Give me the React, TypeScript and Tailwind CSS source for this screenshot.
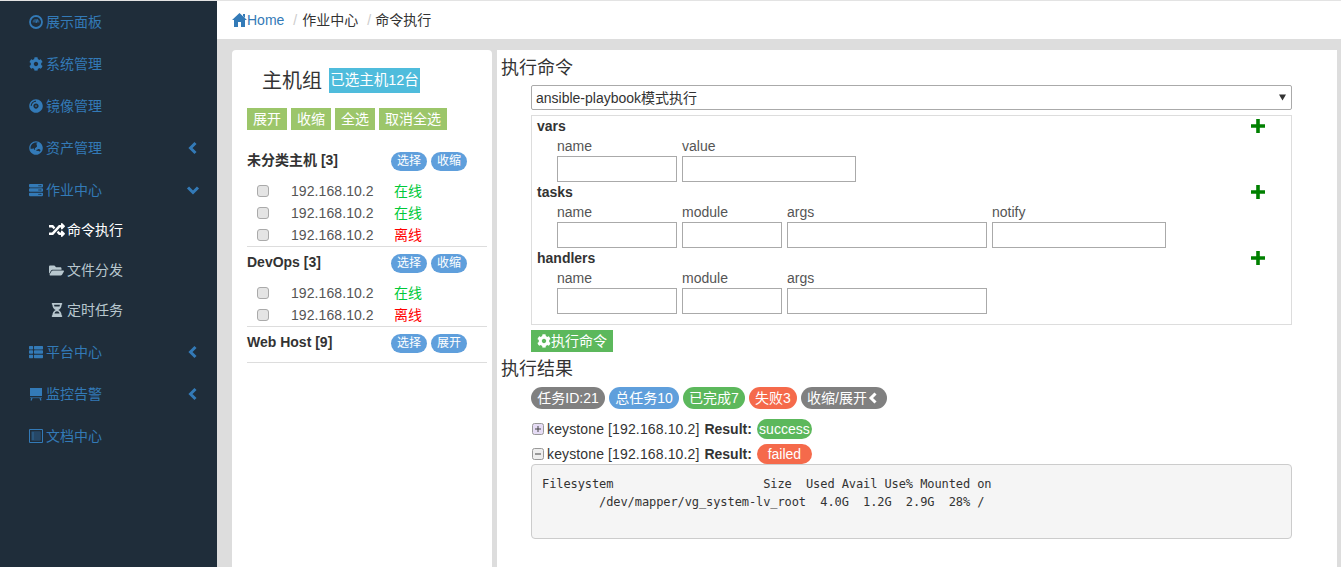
import type { ReactNode } from "react";
import {
  FaCog,
  FaCompactDisc,
  FaFolderOpen,
  FaGlobeAsia,
  FaHourglassHalf,
  FaRandom,
  FaServer,
  FaThList,
} from "react-icons/fa";

function GaugeIcon() {
  return (
    <svg width="14" height="14" viewBox="0 0 14 14">
      <circle cx="7" cy="7" r="6" fill="none" stroke="currentColor" strokeWidth="1.8" />
      <path d="M3.5 7.5a3.5 3.5 0 0 1 7 0z" fill="currentColor" opacity="0.55" />
      <path d="M7 8l1.5-3.5" stroke="currentColor" strokeWidth="1" />
    </svg>
  );
}

function BoardIcon() {
  return (
    <svg width="14" height="14" viewBox="0 0 14 14">
      <path d="M1 1h12v8H1z" fill="currentColor" />
      <path d="M1 10.2h12v1H1z" fill="currentColor" opacity="0.7" />
      <path d="M3 11l-1 2.5M11 11l1 2.5" stroke="currentColor" strokeWidth="1.2" />
    </svg>
  );
}

function ListAltIcon() {
  return (
    <svg width="14" height="14" viewBox="0 0 14 14">
      <path d="M.5.5h13v13H.5z" fill="none" stroke="currentColor" />
      <path d="M2.5 2.5h9v9h-9z" fill="currentColor" opacity="0.55" />
      <path d="M5 4h6M5 6h6M5 8h6M5 10h6" stroke="#1f2d3a" strokeWidth="0.7" />
    </svg>
  );
}

function HomeIcon() {
  return (
    <svg width="15" height="14" viewBox="0 0 15 14" className="shrink-0 text-[#337ab7]">
      <path d="M7.5 0L15 7h-2v7H9V9H6v5H2V7H0z" fill="currentColor" />
      <path d="M11 1h2v4l-2-2z" fill="currentColor" />
    </svg>
  );
}

function PlusIcon() {
  return (
    <svg width="14" height="14" viewBox="0 0 14 14" className="shrink-0">
      <path d="M7 0v14M0 7h14" fill="none" stroke="#008000" strokeWidth="3.6" />
    </svg>
  );
}

function NavArrow({ dir }: { dir: "left" | "down" }) {
  return (
    <svg width="14" height="14" viewBox="0 0 14 14" className="ml-[84px] shrink-0">
      <path
        d={dir === "left" ? "M9.5 2L4.5 7l5 5" : "M2 4.5l5 5 5-5"}
        fill="none"
        stroke="currentColor"
        strokeWidth="3"
      />
    </svg>
  );
}

function NavItem({ icon, label, arrow }: { icon: ReactNode; label: string; arrow?: "left" | "down" }) {
  return (
    <div className="flex h-[42px] items-center pl-[29px] text-[14px] text-[#337ab7]">
      <span className="flex w-[17px] shrink-0 items-center">{icon}</span>
      <span>{label}</span>
      {arrow && <NavArrow dir={arrow} />}
    </div>
  );
}

function SubItem({ icon, label, active }: { icon: ReactNode; label: string; active?: boolean }) {
  return (
    <div className={`flex h-[40px] items-center pb-[2px] pl-[48px] text-[14px] ${active ? "text-white" : "text-[#b8c7ce]"}`}>
      <span className="flex w-[19px] shrink-0 items-center justify-center pr-[2px]">{icon}</span>
      <span>{label}</span>
    </div>
  );
}

function Sidebar() {
  return (
    <aside className="w-[217px] shrink-0 bg-[#1f2d3a]">
      <NavItem icon={<GaugeIcon />} label="展示面板" />
      <NavItem icon={<FaCog className="h-[14px] w-[14px]" />} label="系统管理" />
      <NavItem icon={<FaCompactDisc className="h-[14px] w-[14px]" />} label="镜像管理" />
      <NavItem icon={<FaGlobeAsia className="h-[14px] w-[14px]" />} label="资产管理" arrow="left" />
      <NavItem icon={<FaServer className="h-[14px] w-[14px]" />} label="作业中心" arrow="down" />
      <SubItem icon={<FaRandom className="h-[16px] w-[16px]" />} label="命令执行" active />
      <SubItem icon={<FaFolderOpen className="h-[15px] w-[15px]" />} label="文件分发" />
      <SubItem icon={<FaHourglassHalf className="h-[14px] w-[14px]" />} label="定时任务" />
      <NavItem icon={<FaThList className="h-[14px] w-[14px]" />} label="平台中心" arrow="left" />
      <NavItem icon={<BoardIcon />} label="监控告警" arrow="left" />
      <NavItem icon={<ListAltIcon />} label="文档中心" />
    </aside>
  );
}

function HostRow({ online }: { online: boolean }) {
  return (
    <div className="flex h-[22px] items-center text-[14px]">
      <input
        type="checkbox"
        className="ml-[10px] h-[12px] w-[12px] appearance-none rounded-[3px] border border-[#aaa] bg-[#e4e4e4]"
      />
      <span className="ml-[22px] w-[103px] tracking-[0.08px] text-[#555]">192.168.10.2</span>
      <span className={online ? "text-[#00c93a]" : "text-[#f00]"}>{online ? "在线" : "离线"}</span>
    </div>
  );
}

function GroupHeader({ name, action }: { name: string; action: string }) {
  return (
    <div className="flex h-[32px] items-center text-[14px] font-bold text-[#333]">
      <span className="-mt-[2px] w-[144px]">{name}</span>
      <span className="flex h-[19px] w-[36px] items-center justify-center rounded-full bg-[#5f9fdc] text-[12px] font-normal text-white">选择</span>
      <span className="ml-[4px] flex h-[19px] w-[36px] items-center justify-center rounded-full bg-[#5f9fdc] text-[12px] font-normal text-white">{action}</span>
    </div>
  );
}

function HostPanel() {
  return (
    <section className="w-[260px] shrink-0 rounded-t-[4px] bg-white pl-[15px] pr-[5px]">
      <div className="flex h-[58px] items-center pl-[15px] pt-[3px]">
        <span className="text-[20px] text-[#333]">主机组</span>
        <span className="ml-[7px] flex h-[25px] w-[91px] items-center justify-center whitespace-nowrap bg-[#4fbcdc] text-[14.5px] text-white">已选主机12台</span>
      </div>
      <div className="flex gap-[4px]">
        {["展开", "收缩", "全选", "取消全选"].map((t) => (
          <span key={t} className="flex h-[22px] items-center bg-[#9cc66a] px-[6px] text-[14px] text-white">{t}</span>
        ))}
      </div>
      <div className="mt-[15px]">
        <GroupHeader name="未分类主机 [3]" action="收缩" />
        <div className="mt-[3px]">
          <HostRow online />
          <HostRow online />
          <HostRow online={false} />
        </div>
      </div>
      <div className="border-t border-[#ddd]">
        <GroupHeader name="DevOps [3]" action="收缩" />
        <div className="mt-[3px]">
          <HostRow online />
          <HostRow online={false} />
        </div>
      </div>
      <div className="border-t border-[#ddd]">
        <GroupHeader name="Web Host [9]" action="展开" />
        <div className="h-[3px]" />
      </div>
      <div className="border-t border-[#ddd]" />
    </section>
  );
}

function TextBox({ width }: { width: string }) {
  return <input type="text" className={`h-[26px] border border-[#aaa] bg-white ${width}`} />;
}

function FieldGroup({ title, fields }: { title: string; fields: { label: string; width: string }[] }) {
  return (
    <div className="h-[66px]">
      <div className="flex h-[20px] items-center justify-between pr-[26px]">
        <span className="text-[14px] font-bold text-[#333]">{title}</span>
        <PlusIcon />
      </div>
      <div className="flex gap-[5px] pl-[20px]">
        {fields.map((f) => (
          <div key={f.label}>
            <div className="flex h-[20px] items-center text-[14px] text-[#555]">{f.label}</div>
            <TextBox width={f.width} />
          </div>
        ))}
      </div>
    </div>
  );
}

function Pill({ color, children }: { color: string; children: ReactNode }) {
  return (
    <span className={`flex h-[22px] items-center justify-center rounded-full text-[14px] text-white ${color}`}>{children}</span>
  );
}

function ResultRow({ symbol, box, status, color }: { symbol: "plus" | "minus"; box: string; status: string; color: string }) {
  return (
    <div className="flex h-[20px] items-center text-[14px] text-[#333]">
      <svg width="12" height="12" viewBox="0 0 12 12" className="ml-[1px]">
        <rect x="0.5" y="0.5" width="11" height="11" rx="2" fill={box} stroke="#999" />
        <path d={symbol === "plus" ? "M3 6h6M6 3v6" : "M3 6h6"} stroke="#444" />
      </svg>
      <span className="ml-[3px] tracking-[0.13px]">keystone [192.168.10.2]</span>
      <b className="ml-[5px]">Result:</b>
      <span className={`ml-[5px] flex h-[20px] w-[55px] items-center justify-center rounded-full text-[14px] text-white ${color}`}>{status}</span>
    </div>
  );
}

function CommandPanel() {
  return (
    <section className="mr-[4px] min-w-0 flex-1 bg-white pl-[4px]">
      <h4 className="flex h-[35px] items-center pt-[1px] text-[18px] font-normal text-[#333]">执行命令</h4>
      <div className="ml-[30px] w-[761px]">
        <div className="relative">
          <select className="h-[25px] w-full appearance-none rounded-[2px] border border-[#aaa] bg-white pl-[4px] pt-[1px] text-[14px] text-[#333]">
            <option>ansible-playbook模式执行</option>
          </select>
          <svg width="7" height="7" viewBox="0 0 7 7" className="absolute right-[6px] top-[9px]">
            <path d="M0 .5h7L3.5 6.5z" fill="#333" />
          </svg>
        </div>
        <div className="mt-[5px] h-[210px] border border-[#ddd] pl-[5px]">
          <FieldGroup title="vars" fields={[{ label: "name", width: "w-[120px]" }, { label: "value", width: "w-[174px]" }]} />
          <FieldGroup
            title="tasks"
            fields={[
              { label: "name", width: "w-[120px]" },
              { label: "module", width: "w-[100px]" },
              { label: "args", width: "w-[200px]" },
              { label: "notify", width: "w-[174px]" },
            ]}
          />
          <FieldGroup
            title="handlers"
            fields={[
              { label: "name", width: "w-[120px]" },
              { label: "module", width: "w-[100px]" },
              { label: "args", width: "w-[200px]" },
            ]}
          />
        </div>
        <button className="mt-[5px] flex h-[22px] w-[82px] items-center bg-[#5cb85c] pl-[6px] text-[14px] text-white">
          <FaCog className="h-[14px] w-[14px]" />
          执行命令
        </button>
      </div>
      <h4 className="flex h-[35px] items-center text-[18px] font-normal text-[#333]">执行结果</h4>
      <div className="ml-[30px] w-[761px]">
        <div className="flex gap-[4px]">
          <div className="w-[74px]"><Pill color="bg-[#808080]">任务ID:21</Pill></div>
          <div className="w-[70px]"><Pill color="bg-[#5f9fdc]">总任务10</Pill></div>
          <div className="w-[62px]"><Pill color="bg-[#5cb85c]">已完成7</Pill></div>
          <div className="w-[48px]"><Pill color="bg-[#f56a4b]">失败3</Pill></div>
          <div className="w-[86px]">
            <Pill color="bg-[#808080]">
              收缩/展开
              <svg width="14" height="14" viewBox="0 0 14 14" className="shrink-0">
                <path d="M8.5 2.5L4 7l4.5 4.5" fill="none" stroke="#fff" strokeWidth="3" />
              </svg>
            </Pill>
          </div>
        </div>
        <div className="mt-[10px] flex flex-col gap-[5px]">
          <ResultRow symbol="plus" box="#e6dcf5" status="success" color="bg-[#5cb85c]" />
          <ResultRow symbol="minus" box="#eee" status="failed" color="bg-[#f56a4b]" />
        </div>
        <pre className="h-[75px] rounded-[4px] border border-[#ccc] bg-[#f5f5f5] pl-[10px] pt-[10px] font-['DejaVu_Sans_Mono',monospace] text-[12px] leading-[18px] tracking-[-0.09px] text-[#333]">
          {"Filesystem                     Size  Used Avail Use% Mounted on\n        /dev/mapper/vg_system-lv_root  4.0G  1.2G  2.9G  28% /"}
        </pre>
      </div>
    </section>
  );
}

export default function App() {
  return (
    <div className="flex h-[567px] flex-col overflow-hidden bg-[#ddd] font-['Liberation_Sans','Noto_Sans_CJK_SC',sans-serif]">
      <div className="h-px shrink-0 bg-[#e3e3e3]" />
      <div className="flex min-h-0 flex-1">
        <Sidebar />
        <main className="flex min-w-0 flex-1 flex-col">
          <nav className="flex h-[38px] shrink-0 items-center bg-white pl-[15px] text-[14px] text-[#333]">
            <HomeIcon />
            <span className="text-[#337ab7]">Home</span>
            <span className="ml-[9px] text-[#ccc]">/</span>
            <span className="ml-[5px]">作业中心</span>
            <span className="ml-[9px] text-[#ccc]">/</span>
            <span className="ml-[4px]">命令执行</span>
          </nav>
          <div className="flex min-h-0 flex-1 pl-[15px] pt-[11px]">
            <HostPanel />
            <div className="w-[5px] shrink-0" />
            <CommandPanel />
          </div>
        </main>
      </div>
    </div>
  );
}
